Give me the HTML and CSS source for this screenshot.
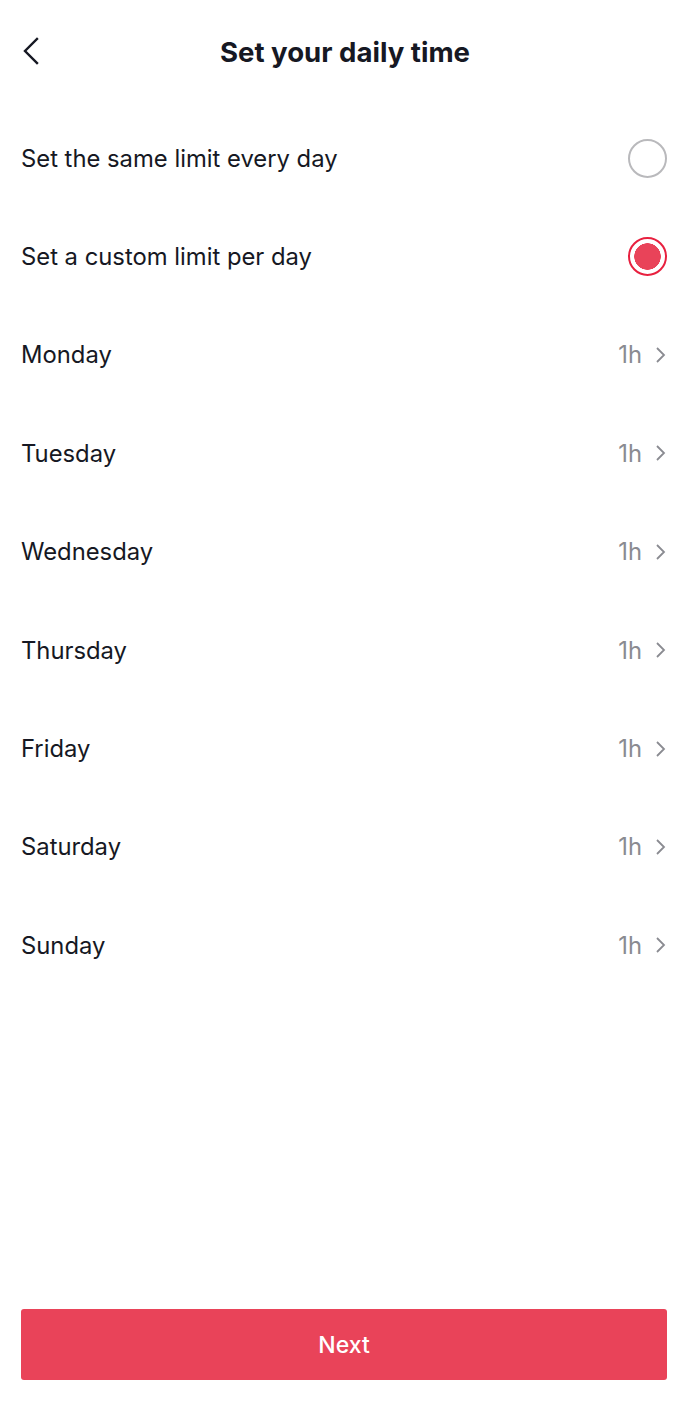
FILE: index.html
```html
<!DOCTYPE html>
<html lang="en">
<head>
<meta charset="utf-8">
<title>Set your daily time</title>
<link rel="stylesheet" href="styles.css">
</head>
<body>
<div class="screen">
  <header class="header">
    <button class="back" aria-label="Back">
      <svg width="18" height="30" viewBox="0 0 18 30"><path d="M15 2 L3 14 L15 26" fill="none" stroke="#161823" stroke-width="2.4" stroke-linecap="square" stroke-linejoin="miter"/></svg>
    </button>
    <h1 class="title">Set your daily time</h1>
  </header>
  <main class="list">
    <div class="row">
      <span class="label">Set the same limit every day</span>
      <span class="radio"></span>
    </div>
    <div class="row">
      <span class="label">Set a custom limit per day</span>
      <span class="radio selected"></span>
    </div>
    <div class="row"><span class="label">Monday</span><span class="value">1h<svg class="chev" width="12" height="20" viewBox="0 0 12 20"><path d="M2 3 L9 10 L2 17" fill="none" stroke="#8a8b91" stroke-width="1.8"/></svg></span></div>
    <div class="row"><span class="label">Tuesday</span><span class="value">1h<svg class="chev" width="12" height="20" viewBox="0 0 12 20"><path d="M2 3 L9 10 L2 17" fill="none" stroke="#8a8b91" stroke-width="1.8"/></svg></span></div>
    <div class="row"><span class="label">Wednesday</span><span class="value">1h<svg class="chev" width="12" height="20" viewBox="0 0 12 20"><path d="M2 3 L9 10 L2 17" fill="none" stroke="#8a8b91" stroke-width="1.8"/></svg></span></div>
    <div class="row"><span class="label">Thursday</span><span class="value">1h<svg class="chev" width="12" height="20" viewBox="0 0 12 20"><path d="M2 3 L9 10 L2 17" fill="none" stroke="#8a8b91" stroke-width="1.8"/></svg></span></div>
    <div class="row"><span class="label">Friday</span><span class="value">1h<svg class="chev" width="12" height="20" viewBox="0 0 12 20"><path d="M2 3 L9 10 L2 17" fill="none" stroke="#8a8b91" stroke-width="1.8"/></svg></span></div>
    <div class="row"><span class="label">Saturday</span><span class="value">1h<svg class="chev" width="12" height="20" viewBox="0 0 12 20"><path d="M2 3 L9 10 L2 17" fill="none" stroke="#8a8b91" stroke-width="1.8"/></svg></span></div>
    <div class="row"><span class="label">Sunday</span><span class="value">1h<svg class="chev" width="12" height="20" viewBox="0 0 12 20"><path d="M2 3 L9 10 L2 17" fill="none" stroke="#8a8b91" stroke-width="1.8"/></svg></span></div>
  </main>
  <footer class="footer">
    <button class="next">Next</button>
  </footer>
</div>
</body>
</html>
```
FILE: styles.css
```css
* { box-sizing: border-box; }
html, body { margin: 0; padding: 0; background: #fff; }
body {
  font-family: Inter, "Liberation Sans", Arial, sans-serif;
  color: #161823;
}
.screen {
  width: 690px;
  min-height: 1420px;
  display: flex;
  flex-direction: column;
}
.header {
  height: 104px;
  display: grid;
  grid-template-columns: 80px 1fr 80px;
  align-items: center;
}
.back {
  grid-column: 1;
  background: none;
  border: 0;
  padding: 0 0 0 22px;
  height: 104px;
  display: flex;
  align-items: center;
  cursor: pointer;
}
.back svg { display: block; }
.title {
  grid-column: 2;
  margin: 0;
  text-align: center;
  font-size: 27.6px;
  font-weight: 700;
  letter-spacing: 0;
}
.list {
  flex: 1;
  padding-top: 5px;
}
.row {
  height: 98.4px;
  display: flex;
  align-items: center;
  justify-content: space-between;
  padding: 0 23px 0 21px;
}
.label {
  font-size: 23.8px;
}
.radio {
  width: 39px;
  height: 39px;
  border-radius: 50%;
  border: 2px solid #b9b9bc;
}
.radio.selected {
  border: 2.6px solid #e8203f;
  background: radial-gradient(circle, #e94359 0 13px, #fff 13.5px);
}
.value {
  display: flex;
  align-items: center;
  gap: 13px;
  font-size: 23.8px;
  color: #8a8b91;
}
.chev { display: block; }
.footer {
  padding: 0 23px 40px 21px;
}
.next {
  width: 100%;
  height: 71px;
  border: 0;
  border-radius: 3px;
  background: #e94359;
  color: #fff;
  font-family: Inter, "Liberation Sans", Arial, sans-serif;
  font-size: 23px;
  font-weight: 500;
}
```
